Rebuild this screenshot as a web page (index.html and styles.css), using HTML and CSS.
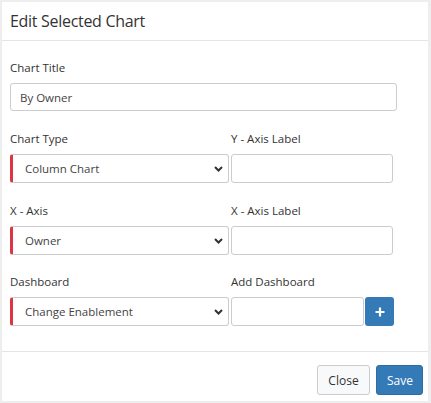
FILE: index.html
```html
<!DOCTYPE html>
<html>
<head>
<meta charset="utf-8">
<link rel="stylesheet" href="styles.css">
</head>
<body>
<div class="modal">
  <div class="modal-header"><h4 class="modal-title">Edit Selected Chart</h4></div>
  <div class="modal-body">
    <div class="group">
      <label class="lbl">Chart Title</label>
      <input class="ctl ctl-full" type="text" value="By Owner">
    </div>
    <div class="row">
      <div class="group col-left">
        <label class="lbl">Chart Type</label>
        <div class="select"><span>Column Chart</span><svg class="chev" width="9" height="6" viewBox="0 0 9 6"><path d="M1 1 L4.5 4.5 L8 1" fill="none" stroke="#333" stroke-width="2"/></svg></div>
      </div>
      <div class="group col-right">
        <label class="lbl">Y - Axis Label</label>
        <input class="ctl ctl-right" type="text">
      </div>
    </div>
    <div class="row">
      <div class="group col-left">
        <label class="lbl">X - Axis</label>
        <div class="select"><span>Owner</span><svg class="chev" width="9" height="6" viewBox="0 0 9 6"><path d="M1 1 L4.5 4.5 L8 1" fill="none" stroke="#333" stroke-width="2"/></svg></div>
      </div>
      <div class="group col-right">
        <label class="lbl">X - Axis Label</label>
        <input class="ctl ctl-right" type="text">
      </div>
    </div>
    <div class="row last">
      <div class="group col-left">
        <label class="lbl">Dashboard</label>
        <div class="select"><span>Change Enablement</span><svg class="chev" width="9" height="6" viewBox="0 0 9 6"><path d="M1 1 L4.5 4.5 L8 1" fill="none" stroke="#333" stroke-width="2"/></svg></div>
      </div>
      <div class="group col-right">
        <label class="lbl">Add Dashboard</label>
        <div class="addrow">
          <input class="ctl ctl-add" type="text">
          <button class="btn-plus"><svg width="10" height="10" viewBox="0 0 10 10"><path d="M5 0.5 V9.5 M0.5 5 H9.5" stroke="#fff" stroke-width="2.2"/></svg></button>
        </div>
      </div>
    </div>
  </div>
  <div class="modal-footer">
    <button class="btn btn-default">Close</button>
    <button class="btn btn-primary">Save</button>
  </div>
</div>
</body>
</html>
```
FILE: styles.css
```css
html, body { margin: 0; padding: 0; }
body {
  background: #eeeeee;
  font-family: "Open Sans", "Noto Sans", sans-serif;
  color: #333;
  width: 431px;
  height: 403px;
  overflow: hidden;
}
.modal {
  margin: 2px 0 0 2px;
  width: 426px;
  height: 399px;
  background: #fff;
  display: flex;
  flex-direction: column;
}
.modal-header {
  border-bottom: 1px solid #e5e5e5;
  display: flex;
  align-items: center;
  padding-left: 8px;
  box-sizing: border-box;
  height: 39px;
}
.modal-title {
  margin: 0;
  font-size: 16px;
  font-weight: 500;
  color: #333;
  letter-spacing: -0.3px;
}
.modal-body {
  padding: 19px 8px 0 8px;
  height: 311px;
  box-sizing: border-box;
  border-bottom: 1px solid #e5e5e5;
}
.group { display: flex; flex-direction: column; }
.lbl {
  font-size: 11.5px;
  line-height: 16px;
  margin-bottom: 7px;
  color: #333;
}
.row {
  display: flex;
  margin-top: 20px;
}
.row.last { margin-top: 19px; }
.col-left { width: 221px; }
.col-right { width: 165px; }
.ctl {
  box-sizing: border-box;
  height: 28px;
  border: 1px solid #ccc;
  border-radius: 3px;
  font-family: inherit;
  font-size: 11.5px;
  color: #444;
  padding: 0 9px;
  background: #fff;
  outline: none;
  margin: 0;
}
.ctl-full { width: 387px; }
.ctl-right { width: 162px; height: 29px; }
.select {
  box-sizing: border-box;
  width: 219px;
  height: 29px;
  border: 1px solid #ccc;
  border-left: 3px solid #dc3545;
  border-radius: 3px;
  display: flex;
  align-items: center;
  justify-content: space-between;
  padding: 0 5px 0 12px;
  font-size: 11.5px;
  color: #444;
}
.chev { display: block; }
.addrow { display: flex; }
.ctl-add { width: 133px; height: 29px; }
.btn-plus {
  width: 29px;
  height: 29px;
  margin-left: 1px;
  border: 0;
  border-radius: 3px;
  background: #337ab7;
  display: flex;
  align-items: center;
  justify-content: center;
  padding: 0;
}
.modal-footer {
  display: flex;
  justify-content: flex-end;
  gap: 6px;
  padding: 13px 5px 0 0;
}
.btn {
  box-sizing: border-box;
  height: 30px;
  border-radius: 3px;
  font-family: inherit;
  font-size: 12px;
  padding: 0 10px;
}
.btn-default {
  width: 53px;
  background: #f8f9fa;
  border: 1px solid #ccc;
  color: #333;
}
.btn-primary {
  width: 47px;
  background: #337ab7;
  border: 1px solid #2e6da4;
  color: #fff;
}
```
